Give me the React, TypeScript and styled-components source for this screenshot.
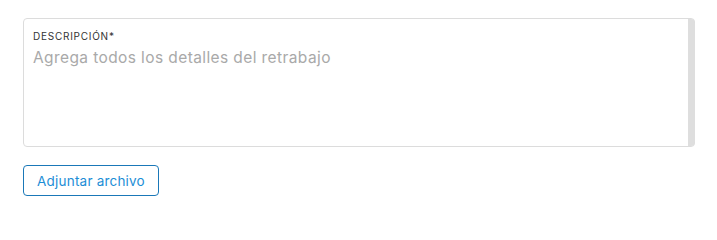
import React from 'react';
import styled, { createGlobalStyle } from 'styled-components';

const GlobalStyle = createGlobalStyle`
  body {
    margin: 0;
    background: #ffffff;
    font-family: Inter, "Liberation Sans", sans-serif;
  }
`;

const Page = styled.div`
  padding: 18px 23px 0 23px;
  width: 717px;
  box-sizing: border-box;
  display: flex;
  flex-direction: column;
  align-items: flex-start;
  gap: 18px;
`;

const Field = styled.div`
  position: relative;
  width: 672px;
  height: 129px;
  box-sizing: border-box;
  border: 1px solid #dcdcdc;
  border-radius: 4px;
  background: #fff;
  padding: 11px 0 0 9px;
  display: flex;
  flex-direction: column;
  gap: 5px;
`;

const Label = styled.label`
  font-size: 10px;
  line-height: 12px;
  color: #333333;
  letter-spacing: 0.75px;
`;

const TextArea = styled.textarea`
  border: none;
  outline: none;
  resize: none;
  padding: 0;
  margin: 0;
  font-family: Inter, "Liberation Sans", sans-serif;
  font-size: 15.5px;
  line-height: 22px;
  letter-spacing: 0.4px;
  color: #333;
  flex: 1;
  width: calc(100% - 20px);
  background: transparent;

  &::placeholder {
    color: #a9a9a9;
  }
`;

const ScrollTrack = styled.div`
  position: absolute;
  top: 0;
  right: -1px;
  bottom: 0;
  width: 7px;
  background: #dedede;
  border-radius: 0 4px 4px 0;
`;

const OutlineButton = styled.button<{ $color: string }>`
  height: 31px;
  width: 136px;
  padding: 0;
  border: 1px solid ${p => p.$color};
  border-radius: 4px;
  background: #fff;
  color: #1d8ed6;
  font-family: Inter, "Liberation Sans", sans-serif;
  font-size: 13.5px;
  letter-spacing: 0.2px;
  cursor: pointer;
`;

const App: React.FC = () => {
  return (
    <>
      <GlobalStyle />
      <Page>
        <Field>
          <Label>DESCRIPCIÓN*</Label>
          <TextArea placeholder="Agrega todos los detalles del retrabajo" />
          <ScrollTrack />
        </Field>
        <OutlineButton $color="#1a78b8">Adjuntar archivo</OutlineButton>
      </Page>
    </>
  );
};

export default App;
